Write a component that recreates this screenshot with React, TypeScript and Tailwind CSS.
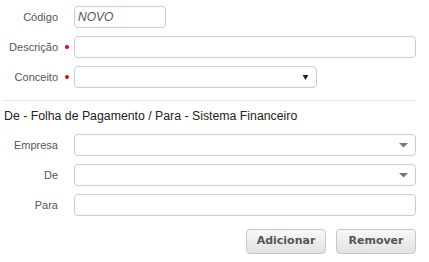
import React from "react";

function Dot({ show }: { show?: boolean }) {
  return (
    <div className="w-[16px] h-full flex items-center pl-[7px]">
      {show && <span className="block w-[4px] h-[4px] rounded-full bg-[#f00000]" />}
    </div>
  );
}

function Label({ text }: { text: string }) {
  return <div className="w-[54px] text-right text-[11px] leading-[13px] text-[#555]">{text}</div>;
}

function Select({ width, dark }: { width: string; dark?: boolean }) {
  return (
    <div className={`${width} h-[22px] border border-[#ccc] rounded-[4px] bg-white flex items-center justify-end pr-[7px]`}>
      {dark ? (
        <svg width="7" height="5" viewBox="0 0 7 5">
          <polygon points="0.5,0 6.5,0 3.5,5" fill="#222" />
        </svg>
      ) : (
        <svg width="9" height="5" viewBox="0 0 9 5">
          <polygon points="0,0 9,0 4.5,4.5" fill="#777" />
        </svg>
      )}
    </div>
  );
}

export default function App() {
  return (
    <div className="w-[429px] h-[262px] bg-white font-['Liberation_Sans',Arial,sans-serif] pt-[6px] pl-[4px] pr-[13px] overflow-hidden">
      <div className="flex flex-col gap-[8px]">
        <div className="flex items-center h-[22px]">
          <Label text="Código" />
          <Dot />
          <div className="w-[92px] h-[22px] border border-[#ccc] rounded-[4px] flex items-center pl-[3px] text-[12px] italic text-[#555]">
            NOVO
          </div>
        </div>
        <div className="flex items-center h-[22px]">
          <Label text="Descrição" />
          <Dot show />
          <div className="flex-1 h-[22px] border border-[#ccc] rounded-[4px]" />
        </div>
        <div className="flex items-center h-[22px]">
          <Label text="Conceito" />
          <Dot show />
          <Select width="w-[243px]" dark />
        </div>
      </div>
      <div className="mt-[12px] h-px bg-[#e3e3e3]" />
      <div className="mt-[8px] text-[12.3px] leading-[14px] text-[#222]">
        De - Folha de Pagamento / Para - Sistema Financeiro
      </div>
      <div className="mt-[11px] flex flex-col gap-[8px]">
        <div className="flex items-center h-[22px]">
          <Label text="Empresa" />
          <Dot />
          <div className="flex-1">
            <Select width="w-full" />
          </div>
        </div>
        <div className="flex items-center h-[22px]">
          <Label text="De" />
          <Dot />
          <div className="flex-1">
            <Select width="w-full" />
          </div>
        </div>
        <div className="flex items-center h-[22px]">
          <Label text="Para" />
          <Dot />
          <div className="flex-1 h-[22px] border border-[#ccc] rounded-[4px]" />
        </div>
      </div>
      <div className="mt-[13px] flex justify-end gap-[10px] pr-0">
        <button className="w-[80px] h-[25px] rounded-[4px] border border-[#c8c8c8] bg-gradient-to-b from-[#f8f8f8] to-[#e2e2e2] text-[11px] font-bold text-[#555] font-['DejaVu_Sans',Verdana,sans-serif]">
          Adicionar
        </button>
        <button className="w-[80px] h-[25px] rounded-[4px] border border-[#c8c8c8] bg-gradient-to-b from-[#f8f8f8] to-[#e2e2e2] text-[11px] font-bold text-[#555] font-['DejaVu_Sans',Verdana,sans-serif]">
          Remover
        </button>
      </div>
    </div>
  );
}
